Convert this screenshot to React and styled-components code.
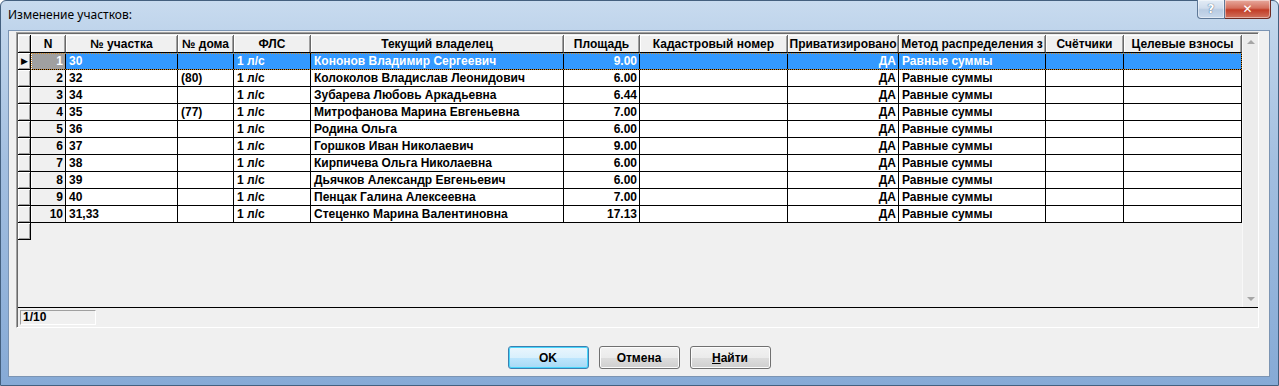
import React from 'react';
import styled, { createGlobalStyle } from 'styled-components';

const GlobalStyle = createGlobalStyle`
  html, body {
    margin: 0;
    padding: 0;
    background: #ffffff;
  }
  body {
    width: 1279px;
    height: 386px;
    overflow: hidden;
    font-family: 'Liberation Sans', Arial, sans-serif;
  }
`;

const columns = [
  { key: 'n', title: 'N', width: 35, align: 'right' },
  { key: 'plot', title: '№ участка', width: 112 },
  { key: 'house', title: '№ дома', width: 56 },
  { key: 'fls', title: 'ФЛС', width: 77 },
  { key: 'owner', title: 'Текущий владелец', width: 253 },
  { key: 'area', title: 'Площадь', width: 76, align: 'right' },
  { key: 'cad', title: 'Кадастровый номер', width: 148 },
  { key: 'priv', title: 'Приватизировано', width: 111, align: 'right' },
  { key: 'method', title: 'Метод распределения з', width: 147 },
  { key: 'meters', title: 'Счётчики', width: 78 },
  { key: 'fees', title: 'Целевые взносы', width: 118 },
];

const owners = [
  ['30', '', 'Кононов Владимир Сергеевич', '9.00'],
  ['32', '(80)', 'Колоколов Владислав Леонидович', '6.00'],
  ['34', '', 'Зубарева Любовь Аркадьевна', '6.44'],
  ['35', '(77)', 'Митрофанова Марина Евгеньевна', '7.00'],
  ['36', '', 'Родина Ольга', '6.00'],
  ['37', '', 'Горшков Иван Николаевич', '9.00'],
  ['38', '', 'Кирпичева Ольга Николаевна', '6.00'],
  ['39', '', 'Дьячков Александр Евгеньевич', '6.00'],
  ['40', '', 'Пенцак Галина Алексеевна', '7.00'],
  ['31,33', '', 'Стеценко Марина Валентиновна', '17.13'],
];

const rows = owners.map(([plot, house, owner, area], i) => ({
  n: String(i + 1),
  plot,
  house,
  fls: '1 л/с',
  owner,
  area,
  cad: '',
  priv: 'ДА',
  method: 'Равные суммы',
  meters: '',
  fees: '',
}));

const Window = styled.div`
  width: 1279px;
  height: 386px;
  box-sizing: border-box;
  display: flex;
  flex-direction: column;
  padding: 0 8px 8px 7px;
  border: 1px solid #44607f;
  border-radius: 6px 6px 0 0;
  background: linear-gradient(180deg, #c8dbef 0px, #bfd4eb 30px, #a3bfe0 160px, #86aad6 100%);
`;

const TitleBar = styled.div`
  height: 29px;
  display: flex;
  align-items: flex-start;
  justify-content: space-between;
  flex-shrink: 0;
`;

const Title = styled.div`
  font-family: 'Noto Sans', 'Open Sans', sans-serif;
  font-size: 12px;
  color: #000;
  padding-top: 5px;
`;

const CaptionButtons = styled.div`
  display: flex;
  margin-top: -1px;
  margin-right: -1px;
`;

const CaptionButton = styled.div`
  height: 19px;
  width: ${({ $wide }) => ($wide ? 46 : 28)}px;
  box-sizing: border-box;
  display: flex;
  align-items: center;
  justify-content: center;
  border: 1px solid ${({ $close }) => ($close ? '#6e2a22' : '#5e7897')};
  border-top: none;
  border-left-width: ${({ $close }) => ($close ? 0 : 1)}px;
  border-radius: ${({ $close }) => ($close ? '0 0 4px 0' : '0 0 0 4px')};
  background: ${({ $close }) =>
    $close
      ? 'linear-gradient(180deg, #e8aa9e 0%, #d46f5c 45%, #c23c26 55%, #d0735f 100%)'
      : 'linear-gradient(180deg, #e3ecf6 0%, #cfdcec 45%, #b8cbe2 55%, #c9d9ec 100%)'};
  box-shadow: inset 0 0 0 1px rgba(255, 255, 255, 0.45);
  color: #fff;
  font-family: 'DejaVu Sans', sans-serif;
  font-weight: bold;
  font-size: 12px;
`;

const HelpGlyph = styled.span`
  color: #ffffff;
  font-size: 12px;
  text-shadow: 0 0 1px #4d6a8d, 0 0 1px #4d6a8d;
`;

const Client = styled.div`
  flex: 1;
  display: flex;
  flex-direction: column;
  background: #f0f0f0;
  border: 1px solid #7b94b3;
  padding: 1px 10px 0 7px;
`;

const GridPanel = styled.div`
  height: 296px;
  box-sizing: border-box;
  display: flex;
  flex-direction: column;
  border: 1px solid #a0a0a0;
  border-right-color: #ffffff;
  border-bottom-color: #ffffff;
  box-shadow: inset 1px 1px 0 #696969;
  padding: 2px 0 0 1px;
`;

const GridBody = styled.div`
  flex: 1;
  display: flex;
  min-height: 0;
`;

const Table = styled.div`
  flex: 1;
  display: flex;
  flex-direction: column;
  background: #f0f0f0;
`;

const Row = styled.div`
  display: flex;
  height: ${({ $header }) => ($header ? 18 : 17)}px;
  flex-shrink: 0;
`;

const RowBody = styled.div`
  display: flex;
  outline: ${({ $focus }) => ($focus ? '1px dotted #d08a2c' : 'none')};
  outline-offset: -1px;
`;

const Indicator = styled.div`
  width: 13px;
  box-sizing: border-box;
  background: #f0f0f0;
  border-right: 1px solid #000;
  border-bottom: 1px solid #000;
  box-shadow: inset 1px 1px 0 #ffffff, inset -1px -1px 0 #a0a0a0;
  display: flex;
  align-items: center;
  justify-content: center;
  font-size: 9px;
  color: #000;
`;

const HeaderCell = styled.div`
  width: ${({ $w }) => $w}px;
  box-sizing: border-box;
  background: #f0f0f0;
  border-right: 1px solid #696969;
  border-bottom: 1px solid #000;
  box-shadow: inset 1px 1px 0 #ffffff, inset -1px 0 0 #a0a0a0;
  display: flex;
  align-items: center;
  justify-content: safe center;
  overflow: hidden;
  white-space: nowrap;
  font-size: 12px;
  font-weight: bold;
  color: #000;
  padding: 0 1px;
`;

const Cell = styled.div`
  width: ${({ $w }) => $w}px;
  box-sizing: border-box;
  border-right: 1px solid #000;
  border-bottom: 1px solid #000;
  display: flex;
  align-items: center;
  justify-content: ${({ $align }) => ($align === 'right' ? 'flex-end' : 'flex-start')};
  padding: 0 2px 0 3px;
  overflow: hidden;
  white-space: nowrap;
  font-size: 12px;
  font-weight: bold;
  background: ${({ $fixed, $selected }) =>
    $fixed ? ($selected ? '#a0a0a0' : '#f0f0f0') : $selected ? '#3399ff' : '#ffffff'};
  color: ${({ $selected }) => ($selected ? '#ffffff' : '#000000')};
  box-shadow: ${({ $fixed }) => ($fixed ? 'inset 1px 0 0 #ffffff' : 'none')};
`;

const ScrollBar = styled.div`
  width: 16px;
  display: flex;
  flex-direction: column;
  justify-content: space-between;
  align-items: center;
  background: #ececec;
  border-left: 1px solid #f8f8f8;
  padding: 5px 0 6px;
  box-sizing: border-box;
`;

const Arrow = styled.div`
  width: 0;
  height: 0;
  border-left: 4px solid transparent;
  border-right: 4px solid transparent;
  ${({ $down }) =>
    $down ? 'border-top: 4px solid #a6a6a6;' : 'border-bottom: 4px solid #a6a6a6;'}
`;

const StatusBar = styled.div`
  height: 19px;
  flex-shrink: 0;
  display: flex;
  align-items: center;
  border-top: 1px solid #000;
  padding-left: 2px;
`;

const StatusBox = styled.div`
  width: 76px;
  height: 15px;
  box-sizing: border-box;
  border: 1px solid #a0a0a0;
  border-right-color: #ffffff;
  border-bottom-color: #ffffff;
  font-size: 12px;
  font-weight: bold;
  color: #000;
  padding-left: 2px;
  line-height: 13px;
`;

const ButtonRow = styled.div`
  display: flex;
  justify-content: center;
  gap: 10px;
  margin-top: 18px;
  padding-left: 3px;
`;

const Button = styled.div`
  width: 81px;
  height: 23px;
  box-sizing: border-box;
  display: flex;
  align-items: center;
  justify-content: center;
  border-radius: 3px;
  border: 1px solid ${({ $default }) => ($default ? '#3c7fb1' : '#707070')};
  background: ${({ $default }) =>
    $default
      ? 'linear-gradient(180deg, #eaf6fd 0%, #d9f0fc 50%, #bee6fd 51%, #a7d9f5 100%)'
      : 'linear-gradient(180deg, #f2f2f2 0%, #ebebeb 50%, #dddddd 51%, #cfcfcf 100%)'};
  box-shadow: inset 0 0 0 1px ${({ $default }) => ($default ? '#48d6fb' : '#fcfcfc')};
  font-size: 12px;
  font-weight: bold;
  color: #000;
  u {
    text-decoration: underline;
  }
`;

export default function App() {
  return (
    <>
      <GlobalStyle />
      <Window>
        <TitleBar>
          <Title>Изменение участков:</Title>
          <CaptionButtons>
            <CaptionButton>
              <HelpGlyph>?</HelpGlyph>
            </CaptionButton>
            <CaptionButton $close $wide>
              ✕
            </CaptionButton>
          </CaptionButtons>
        </TitleBar>
        <Client>
          <GridPanel>
            <GridBody>
              <Table>
                <Row $header>
                  <Indicator />
                  {columns.map((c) => (
                    <HeaderCell key={c.key} $w={c.width}>
                      {c.title}
                    </HeaderCell>
                  ))}
                </Row>
                {rows.map((r, i) => (
                  <Row key={r.n}>
                    <Indicator>{i === 0 ? '▶' : ''}</Indicator>
                    <RowBody $focus={i === 0}>
                      {columns.map((c) => (
                        <Cell
                          key={c.key}
                          $w={c.width}
                          $align={c.align}
                          $fixed={c.key === 'n'}
                          $selected={i === 0}
                        >
                          {r[c.key]}
                        </Cell>
                      ))}
                    </RowBody>
                  </Row>
                ))}
                <Row>
                  <Indicator />
                </Row>
              </Table>
              <ScrollBar>
                <Arrow />
                <Arrow $down />
              </ScrollBar>
            </GridBody>
            <StatusBar>
              <StatusBox>1/10</StatusBox>
            </StatusBar>
          </GridPanel>
          <ButtonRow>
            <Button $default>OK</Button>
            <Button>Отмена</Button>
            <Button>
              <span>
                <u>Н</u>айти
              </span>
            </Button>
          </ButtonRow>
        </Client>
      </Window>
    </>
  );
}
